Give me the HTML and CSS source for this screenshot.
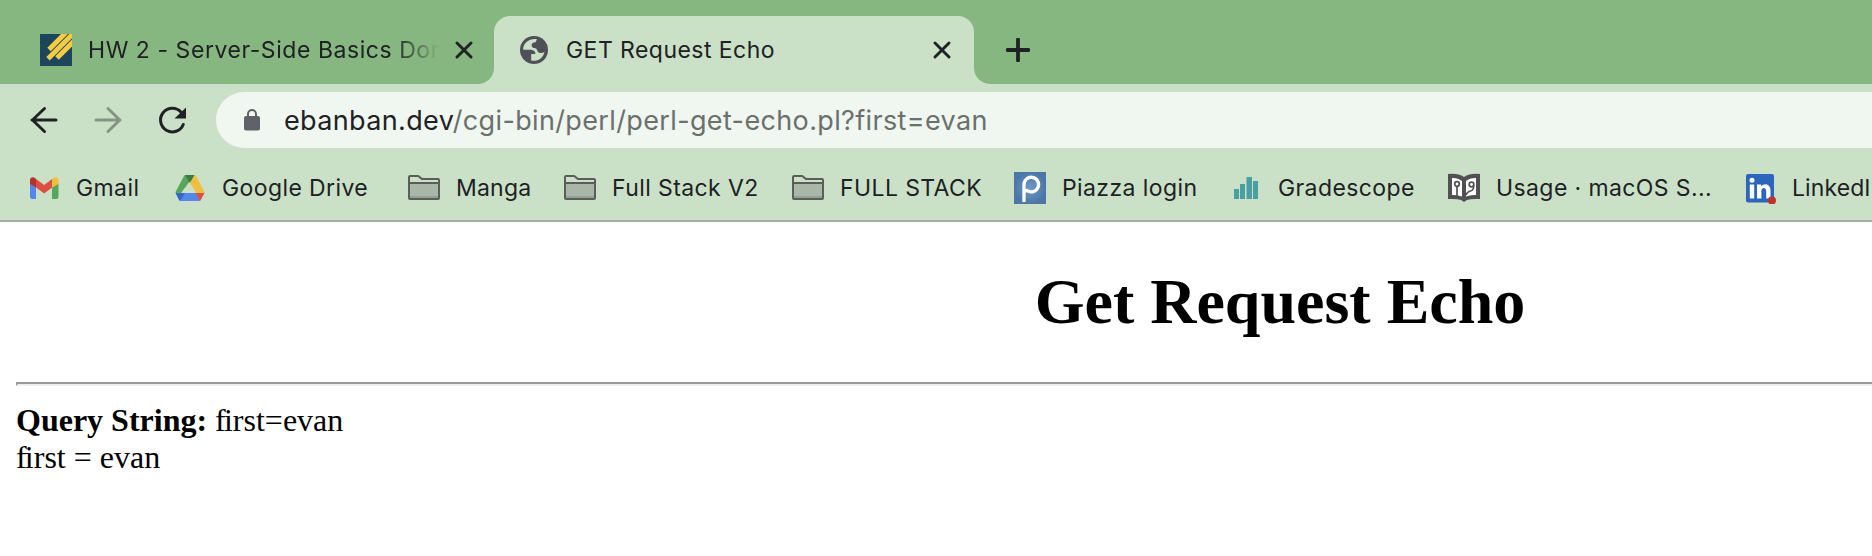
FILE: index.html
```
<!DOCTYPE html>
<html lang="en">
<head>
<meta charset="utf-8">
<title>GET Request Echo</title>
<link rel="stylesheet" href="styles.css">
</head>
<body>
<header class="browser">
  <div class="tabs">
    <div class="tab tab-idle">
      <svg class="icon favicon" viewBox="0 0 32 32"><path fill="#1d455c" d="M0 0h32v32H0z"/><g stroke="#f5cc42" stroke-width="4.900"><path d="M9 15.500 26-1.500M8 24.700 34-1.300M17 24 34 7"/></g></svg>
      <span class="title title-idle">HW 2 - Server-Side Basics Don</span>
      <svg class="close" viewBox="0 0 18 18"><path d="M2 2 16 16M16 2 2 16"/></svg>
    </div>
    <div class="tab tab-active">
      <svg class="globe" viewBox="0 0 28 28"><circle cx="14" cy="14" r="14" fill="#4f5057"/><path fill="#cae1c8" d="M17 3.2C12 2 5.500 4.800 3.600 10.500c-.3 1-.4 2-.4 3.200h7.700c2.700.2 4.700 1.800 4.600 4.400h-4.300v6.500c6.300 1.200 12.200-2.300 13.300-9.200-1.400 1.600-3.700 2.100-5.700 1-2-.9-1.600-3-2.800-3.800-2-.9-4.300-.4-4.400-3.300.2-2.200 1.700-3.200 4-3.100z"/></svg>
      <span class="title title-active">GET Request Echo</span>
      <svg class="close" viewBox="0 0 18 18"><path d="M2 2 16 16M16 2 2 16"/></svg>
    </div>
    <div class="tab-rest"><svg class="plus" viewBox="0 0 24 24"><path d="M12 1.500v21M1.500 12h21"/></svg></div>
  </div>
  <div class="toolbar">
    <svg class="nav" viewBox="0 0 32 32"><path d="M28 16H4M16.500 4.500 4.500 16l12 11.500"/></svg>
    <svg class="nav nav-off" viewBox="0 0 32 32"><path d="M4 16h24M16 4.500 27.800 16 16 27.500"/></svg>
    <svg class="nav" viewBox="0 0 32 32"><path d="M27.300 20.500A11.800 11.800 0 1 1 25.200 8.300"/><path class="solid" d="M30 3.500v11H18.500z"/></svg>
    <div class="omnibox">
      <svg class="lock" viewBox="0 0 16 22"><path fill="none" stroke="#5f6368" stroke-width="2" d="M4 8V5a4 4 0 0 1 8 0v3"/><rect y="7" width="16" height="14.500" rx="2" fill="#5f6368"/></svg>
      <span class="url">ebanban.dev<span class="path">/cgi-bin/perl/perl-get-echo.pl?first=evan</span></span>
    </div>
  </div>
  <nav class="bookmarks">
    <div class="bm bm-gmail"><svg class="icon" viewBox="0 0 32 32"><path fill="#5486eb" d="M2 11l6 4.500V27H4a2 2 0 0 1-2-2z"/><path fill="#58a55c" d="M24 15.500 30.500 11v14a2 2 0 0 1-2 2H24z"/><path fill="#db5041" d="M8 7l8.200 6L24 7v8.500l-7.800 6L8 15.500z"/><path fill="#b3342a" d="M2 12V8c0-3 3.500-4 6-1v8.500z"/><path fill="#f1be42" d="M24 7c3-3 6.500-2 6.500 1v4L24 15.500z"/></svg><span>Gmail</span></div>
    <div class="bm bm-drive"><svg class="icon" viewBox="0 0 32 32"><path fill="#58a55c" d="M11.500 3h9L7 21H1.500q0-1 .5-2L10 4q.5-1 1.500-1z"/><path fill="#3a7d42" d="M11 3h10l-5 8z"/><path fill="#f1be42" d="M20.500 3q1 .2 1.500 1l8 15q.5 1 .3 2H22l-6-10z"/><path fill="#5486eb" d="M7 21h15l4 8H6z"/><path fill="#3367c8" d="M1.500 21H11l-5 8q-.6-.3-1-1z"/><path fill="#db5041" d="M21.500 21h9l-3.700 7q-.3.800-1 1z"/><path fill="#cae1c8" d="m16 11 6 10H10.500z"/></svg><span>Google Drive</span></div>
    <div class="bm bm-manga"><svg class="icon" viewBox="0 0 32 32"><path fill="#a8b7a7" d="M1 11h30v16H1z"/><path fill="#94a193" d="M2 24h28v2H2z"/><path fill="none" stroke="#5b5d5b" stroke-width="2" d="M1 11V5q0-1 1-1h8q1 0 1.500 1l2.500 2h16q1 0 1 1v18q0 1-1 1H2q-1 0-1-1V11h30"/></svg><span>Manga</span></div>
    <div class="bm bm-v2"><svg class="icon" viewBox="0 0 32 32"><path fill="#a8b7a7" d="M1 11h30v16H1z"/><path fill="#94a193" d="M2 24h28v2H2z"/><path fill="none" stroke="#5b5d5b" stroke-width="2" d="M1 11V5q0-1 1-1h8q1 0 1.500 1l2.500 2h16q1 0 1 1v18q0 1-1 1H2q-1 0-1-1V11h30"/></svg><span>Full Stack V2</span></div>
    <div class="bm bm-full"><svg class="icon" viewBox="0 0 32 32"><path fill="#a8b7a7" d="M1 11h30v16H1z"/><path fill="#94a193" d="M2 24h28v2H2z"/><path fill="none" stroke="#5b5d5b" stroke-width="2" d="M1 11V5q0-1 1-1h8q1 0 1.500 1l2.500 2h16q1 0 1 1v18q0 1-1 1H2q-1 0-1-1V11h30"/></svg><span>FULL STACK</span></div>
    <div class="bm bm-piazza"><svg class="icon" viewBox="0 0 32 32"><defs><radialGradient id="pz"><stop offset="0" stop-color="#6c9ac4"/><stop offset="1" stop-color="#4b77a8"/></radialGradient></defs><path fill="url(#pz)" d="M0 0h32v32H0z"/><path fill="none" stroke="#fff" stroke-width="3.300" d="M10 30V13a7.300 7.300 0 1 1 3 5.500q-1.500.8-3 .5"/></svg><span>Piazza login</span></div>
    <div class="bm bm-grade"><svg class="icon" viewBox="0 0 32 32"><path fill="#4aa0a0" d="M4 17h5v10H4zM10 12h5v15h-5zM16.500 5H22v22h-5.500zM23 9h5v18h-5z"/></svg><span>Gradescope</span></div>
    <div class="bm bm-usage"><svg class="icon" viewBox="0 0 32 32"><path fill="#515151" d="M0 2q10-1 16 3 6-4 16-3v25q-9-.5-13 1l-3 2-3-2q-4-1.500-13-1z"/><path fill="#fff" d="M4 6q6-.2 10 3v15.500Q9 22.500 4 23zM18 9q4-3.200 10-3v17q-5-.5-10 1.500z"/><g fill="none" stroke="#515151" stroke-width="1.700"><circle cx="9" cy="12" r="2.300"/><path d="M9 14v10"/><circle cx="23.500" cy="12.500" r="2.300"/><path d="M25.500 13q1 5-3 6-3 .5-4.500 4"/></g></svg><span>Usage · macOS S...</span></div>
    <div class="bm bm-linkedin"><svg class="icon" viewBox="0 0 32 32"><rect x="2" y="2" width="28" height="28.500" rx="2" fill="#2b65bc"/><g fill="#fff"><circle cx="8" cy="8.300" r="2.500"/><path d="M5.800 12.500h4.400v14H5.800zM13 12.500h4.200v2c3-4 9.300-2.500 9.300 4v8h-4.300v-7.500c0-4-4.800-4-4.800 0v7.500H13z"/></g><circle cx="28" cy="28.500" r="4" fill="#c0302a"/></svg><span>LinkedI</span></div>
  </nav>
</header>
<main class="page">
  <h1>Get Request Echo</h1>
  <hr>
  <b>Query String:</b> <span class="fi">f</span>irst=evan<br>
  <span class="fi">f</span>irst = evan
</main>
</body>
</html>
```
FILE: styles.css
```
* { box-sizing: border-box; }
body {
  margin: 0;
  height: 556px;
  overflow: hidden;
  background: #fff;
  color: #000;
}
svg { display: block; flex: none; }
.browser {
  background: #cae1c8;
  color: #202124;
  font-family: Inter, sans-serif;
  letter-spacing: 0.4px;
  border-bottom: 2px solid #a3b1a2;
}
.icon { width: 32px; height: 32px; }

.tabs {
  display: flex;
  height: 84px;
  background: linear-gradient(#87b781, #87b781) 0 0 / 100% 68px no-repeat;
}
.tab {
  display: flex;
  align-items: center;
  padding-top: 16px;
  font-size: 23px;
  white-space: nowrap;
}
.tab-idle {
  width: 494px;
  padding-left: 40px;
  background: #87b781;
  border-bottom-right-radius: 16px;
}
.tab-active {
  width: 480px;
  margin-top: 16px;
  padding: 0 23px 0 26px;
  background: #cae1c8;
  border-radius: 16px 16px 0 0;
}
.title { flex: none; line-height: 34px; }
.title-idle {
  width: 352px;
  margin-left: 16px;
  margin-right: 15px;
  letter-spacing: 0.55px;
  -webkit-mask-image: linear-gradient(to right, #000 304px, transparent 352px);
  mask-image: linear-gradient(to right, #000 304px, transparent 352px);
}
.title-active { margin-left: 18px; margin-right: auto; letter-spacing: 0.45px; }
.globe { width: 28px; height: 30px; }
.close { width: 18px; height: 18px; fill: none; stroke: #202124; stroke-width: 2.9; stroke-linecap: round; }
.tab-rest {
  flex: 1;
  display: flex;
  align-items: center;
  padding: 16px 0 0 32px;
  background: #87b781;
  border-bottom-left-radius: 16px;
}
.plus { width: 24px; height: 24px; stroke: #202124; stroke-width: 3.8; stroke-linecap: round; }

.toolbar { display: flex; align-items: center; gap: 32px; height: 72px; padding-left: 28px; }
.nav { width: 32px; height: 32px; fill: none; stroke: #202124; stroke-width: 3; stroke-linecap: round; stroke-linejoin: round; }
.nav-off { stroke: #849583; }
.solid { fill: #202124; stroke: none; }
.omnibox {
  flex: 1;
  display: flex;
  align-items: center;
  gap: 24px;
  height: 56px;
  margin-left: -4px;
  padding-left: 28px;
  background: #f0f7f0;
  border-radius: 28px 0 0 28px;
}
.lock { width: 16px; height: 22px; }
.url { font-size: 27px; letter-spacing: 0.36px; white-space: nowrap; }
.path { color: #6b706c; }

.bookmarks { display: flex; height: 64px; padding-left: 28px; }
.bm { flex: none; display: flex; align-items: center; gap: 16px; font-size: 23px; white-space: nowrap; }
.bm-gmail { width: 146px; }
.bm-drive { width: 234px; }
.bm-manga { width: 156px; letter-spacing: 0.2px; }
.bm-v2 { width: 228px; }
.bm-full { width: 222px; }
.bm-piazza { width: 216px; }
.bm-grade { width: 218px; }
.bm-usage { width: 296px; }
.bm-linkedin { width: 128px; letter-spacing: 0.1px; }

.page {
  margin-left: 16px;
  font: 32px/37px "Liberation Serif", serif;
}
h1 { margin: 0; padding: 43px 0 43px 672px; font-size: 64px; line-height: 74px; text-align: center; }
hr { margin: 0 0 16px; height: 4px; border: solid; border-width: 2px 0 2px 2px; border-color: #9a9a9a #eee #eee #9a9a9a; }
.fi { letter-spacing: -1.8px; }
```
